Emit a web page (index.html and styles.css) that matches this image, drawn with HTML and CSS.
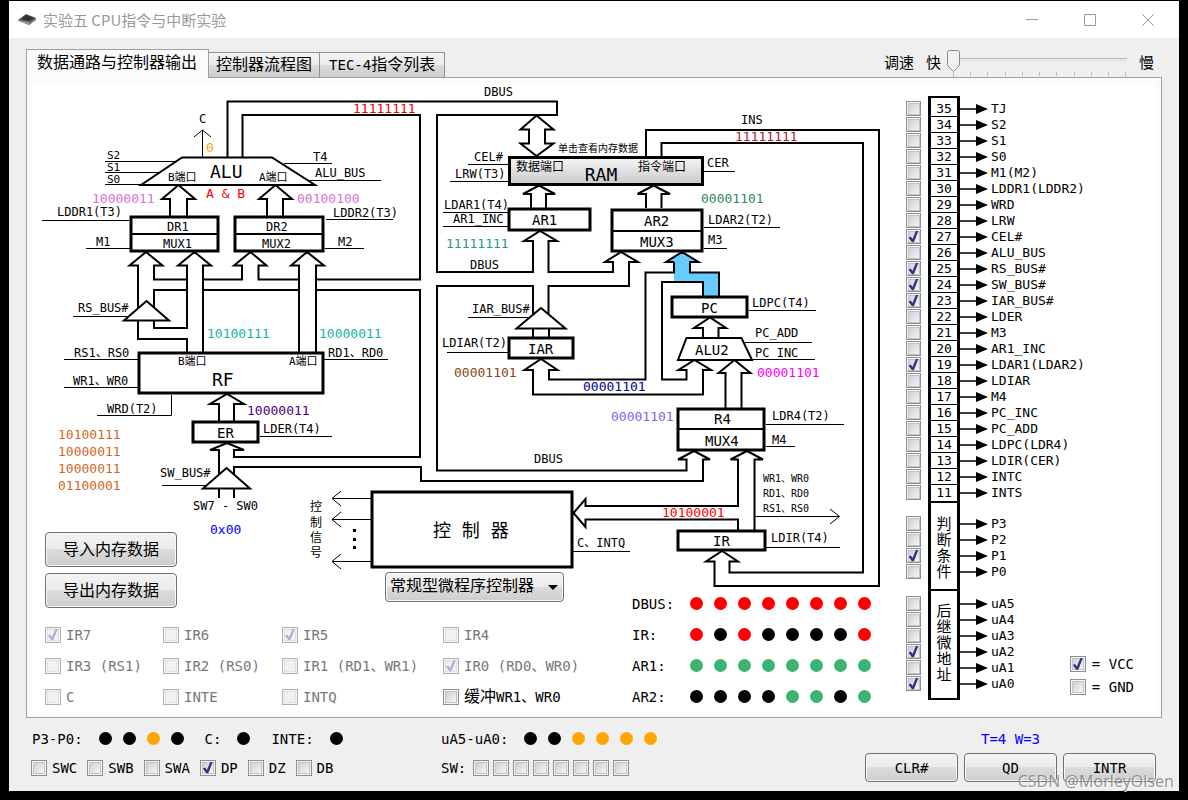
FILE: index.html
```html
<!DOCTYPE html>
<html lang="zh-CN">
<head>
    <meta charset="UTF-8">
    <title>实验五 CPU指令与中断实验</title>
    <link rel="stylesheet" href="styles.css">
</head>
<body>
    <div class="window">
        <header class="titlebar">
            <svg class="app-icon" width="20" height="14" viewBox="0 0 20 14">
                <path d="M1 7 L9 1 L19 5 L12 12 Z" fill="#555"/>
                <path d="M4 6 L9 2 L17 5 L12 8 Z" fill="#333"/>
                <path d="M1 7 L12 9 L12 12 L1 8 Z" fill="#999"/>
                <path d="M12 9 L19 5 L19 7 L12 12 Z" fill="#777"/>
            </svg>
            <h1>实验五 CPU指令与中断实验</h1>
            <div class="window-buttons">
                <button aria-label="最小化"><svg width="14" height="14"><path d="M1 6.500H13"/></svg></button>
                <button aria-label="最大化"><svg width="14" height="14"><path d="M1.500 1.500H12.500V12.500H1.500Z"/></svg></button>
                <button aria-label="关闭"><svg width="14" height="14"><path d="M1 1L13 13M13 1L1 13"/></svg></button>
            </div>
        </header>

        <main>
            <div class="toolbar">
                <div class="tabs" role="tablist">
                    <button class="tab active" role="tab" aria-selected="true">数据通路与控制器输出</button>
                    <button class="tab" role="tab">控制器流程图</button>
                    <button class="tab" role="tab"><span class="latin">TEC-4</span>指令列表</button>
                </div>
                <div class="speed">
                    <label for="speed">调速</label>
                    <span>快</span>
                    <div class="slider">
                        <input type="range" id="speed" min="0" max="10" value="0">
                        <svg class="slider-ticks" width="174" height="5"><path d="M.5 0V5M17.500 0V4M34.500 0V4M52.500 0V4M69.500 0V4M86.500 0V4M103.500 0V4M121.500 0V4M138.500 0V4M155.500 0V4M172.500 0V5"/></svg>
                    </div>
                    <span>慢</span>
                </div>
            </div>

            <section class="panel">
                <div class="board">
                    <div class="datapath">
                        <div class="diagram">
                            <svg width="856" height="505" viewBox="32 83 856 505">
                                <!-- selected path PC -> MUX3 -->
                                <path class="hot" d="M674 282V262H666L682 252L698 262H690V272H719V296H703V282Z"/>

                                <!-- DBUS and the buses hanging off it -->
                                <path class="bus" d="M227.500 157V101.500H557V115H437V272H533V241H524L540 231L557 241H548.500V272H613V262H605L621 252L638 262H629V286H548.500V318"/>
                                <path class="bus" d="M242.500 157V115H420V279.500H316M299 279.500H258.500V265.500H266.500L250.500 252L234 265.500H242V279.500H203M187 279.500H154V265.500H162.500L146 252L129.500 265.500H138V339H187V352"/>
                                <path class="bus" d="M187 290H154V328H187V265.500H178L194.500 252L211 265.500H203V352M203 290H299M299 352V265.500H291L307 252L324 265.500H316V352M316 290H420V457H234V450H244L227 443L210 450H219V480"/>
                                <path class="bus" d="M234 480V467H421V481H703V459.500H710L694 451L678 459.500H686.500V470.500H437V286H533V318"/>
                                <path class="bus" d="M219 488V498M234 488V498M533 328V337M549 328V337"/>
                                <path class="bus" d="M219 421V404H210L227 394L244 404H234V421"/>
                                <path class="bus" d="M170 216V199H162L178.500 185L195 199H187V216M267 216V199H259L275.500 185L292 199H283V216"/>
                                <path class="bus" d="M536.500 115.500L553.500 129.500H545V143.500H553.500L536.500 156L520.500 143.500H529V129.500H520.500Z"/>
                                <path class="bus" d="M531 208V194H523L539 185.500L555 194H546V208M646 208V194H637.500L653.500 185.500L670 194H661.500V208"/>

                                <!-- INS bus down to IR -->
                                <path class="bus" d="M646 157V130H879V586H714.500V561.500H706L722 551L738 561.500H729.500V572.500H863V143H661.500V157"/>

                                <!-- IAR, PC, ALU2 -->
                                <path class="bus" d="M674 262V272.500H645.500V379.500H549V370H557.500L541 359L524.500 370H533V394.500H703V370H711L694.500 360L678.500 370H686.500V379.500H662V282H703V296"/>
                                <path class="bus" d="M674 262H666L682 252L698.500 262H690V272.500H719V296"/>
                                <path class="bus" d="M703 338V328H694L710 317.500L726 328H718.500V338M725.500 408V373H718.500L734.500 360L750.500 373H741.500V408"/>

                                <!-- IR -> MUX4 and controller -->
                                <path class="bus" d="M754.500 530V459.500H763L747 451L730.500 459.500H738V506H585.500V499L573.500 513L585.500 527V519.500H738V530"/>

                                <!-- bus gates -->
                                <path class="bus gate" d="M146.500 301L169 320.500H124Z"/>
                                <path class="bus gate" d="M226.500 468L250 488.500H203Z"/>
                                <path class="bus gate" d="M541 308L565.500 328.500H516.500Z"/>

                                <!-- units -->
                                <path class="bus gate" d="M182 157.500H272L315 185H141Z"/>
                                <path class="bus gate" d="M686.500 338H741.500L752 360H678Z"/>
                                <rect class="unit" x="131" y="217" width="87" height="34"/>
                                <rect class="unit" x="235" y="217" width="88" height="34"/>
                                <rect class="unit" x="139" y="353" width="184" height="40"/>
                                <rect class="unit" x="193" y="422" width="65" height="20"/>
                                <rect class="unit" x="509" y="209" width="81" height="21"/>
                                <rect class="unit" x="612" y="210" width="90" height="41"/>
                                <rect class="unit" x="509" y="338" width="64" height="20"/>
                                <rect class="unit" x="672" y="297" width="75" height="20"/>
                                <rect class="unit" x="678" y="409" width="86" height="41"/>
                                <rect class="unit" x="678" y="531" width="87" height="19"/>
                                <rect class="unit" x="372" y="492" width="200" height="75"/>
                                <path class="bus" d="M131 234H218M235 234H323M612 231H702M678 429H764"/>

                                <!-- signal lines -->
                                <path class="wire" d="M202.500 157V130M194 137L202.500 130L211 137M105 161.500H176M105 172.500H160M105 184.500H143M284 163.500H332M308 180.500H381"/>
                                <path class="wire" d="M42 220.500H129M86 248.500H130M325 248.500H364M326 219.500H393M73 316.500H127M64 359.500H138M64 387.500H138M324 359.500H388M97 415.500H171.500V395M260 436.500H332M162 485.500H207"/>
                                <path class="wire" d="M468 164.500H508M450 181.500H508M703 171.500H735M443 212.500H508M443 226.500H508M704 227.500H780M704 248.500H727M468 317.500H529M447 352.500H508M749 310.500H816M745 342.500H812M752 359.500H815M766 424.500H844M766 446.500H795"/>
                                <path class="wire" d="M755 516.500H839M830 509L839.500 516.500L830 524M766 547.500H840M573 551.500H630"/>
                                <path class="wire" d="M371 498.500H332M341 491L332 498.500L341 506M371 519.500H332M341 512L332 519.500L341 527M371 561.500H332M341 554L332 561.500L341 569"/>
                                <path d="M353 529h3v3h-3zM353 538h3v3h-3zM353 546h3v3h-3z"/>

                                <g class="label">
                                    <text x="199" y="123">C</text>
                                    <text x="107" y="159" class="port">S2</text>
                                    <text x="107" y="171" class="port">S1</text>
                                    <text x="107" y="183" class="port">S0</text>
                                    <text x="313" y="161">T4</text>
                                    <text x="315" y="177">ALU_BUS</text>
                                    <text x="168" y="181" class="port">B端口</text>
                                    <text x="259" y="181" class="port">A端口</text>
                                    <text x="57" y="216">LDDR1(T3)</text>
                                    <text x="333" y="217">LDDR2(T3)</text>
                                    <text x="96" y="246">M1</text>
                                    <text x="338" y="246">M2</text>
                                    <text x="167" y="231">DR1</text>
                                    <text x="163" y="248">MUX1</text>
                                    <text x="266" y="231">DR2</text>
                                    <text x="262" y="248">MUX2</text>
                                    <text x="78" y="312">RS_BUS#</text>
                                    <text x="74" y="357">RS1、RS0</text>
                                    <text x="73" y="385">WR1、WR0</text>
                                    <text x="328" y="357">RD1、RD0</text>
                                    <text x="178" y="365" class="port">B端口</text>
                                    <text x="289" y="365" class="port">A端口</text>
                                    <text x="107" y="413">WRD(T2)</text>
                                    <text x="263" y="433">LDER(T4)</text>
                                    <text x="160" y="477">SW_BUS#</text>
                                    <text x="193" y="510">SW7 - SW0</text>
                                    <text x="484" y="96">DBUS</text>
                                    <text x="741" y="124">INS</text>
                                    <text x="474" y="161">CEL#</text>
                                    <text x="455" y="178">LRW(T3)</text>
                                    <text x="707" y="167">CER</text>
                                    <text x="444" y="209">LDAR1(T4)</text>
                                    <text x="453" y="223">AR1_INC</text>
                                    <text x="470" y="269">DBUS</text>
                                    <text x="708" y="224">LDAR2(T2)</text>
                                    <text x="708" y="244">M3</text>
                                    <text x="472" y="313">IAR_BUS#</text>
                                    <text x="442" y="347">LDIAR(T2)</text>
                                    <text x="752" y="307">LDPC(T4)</text>
                                    <text x="755" y="337">PC_ADD</text>
                                    <text x="755" y="357">PC_INC</text>
                                    <text x="772" y="420">LDR4(T2)</text>
                                    <text x="772" y="444">M4</text>
                                    <text x="534" y="463">DBUS</text>
                                    <text x="771" y="542">LDIR(T4)</text>
                                    <text x="577" y="547">C、INTQ</text>
                                    <text x="310" y="511">控</text>
                                    <text x="310" y="527">制</text>
                                    <text x="310" y="542">信</text>
                                    <text x="310" y="557">号</text>
                                </g>

                                <g class="note">
                                    <text x="763" y="482">WR1、WR0</text>
                                    <text x="763" y="497">RD1、RD0</text>
                                    <text x="763" y="512">RS1、RS0</text>
                                    <text x="558" y="152">单击查看内存数据</text>
                                </g>

                                <g class="name">
                                    <text x="217" y="438">ER</text>
                                    <text x="532" y="225">AR1</text>
                                    <text x="644" y="226">AR2</text>
                                    <text x="640" y="247">MUX3</text>
                                    <text x="528" y="354">IAR</text>
                                    <text x="701" y="313">PC</text>
                                    <text x="695" y="355">ALU2</text>
                                    <text x="714" y="424">R4</text>
                                    <text x="705" y="446">MUX4</text>
                                    <text x="713" y="546">IR</text>
                                </g>

                                <g class="name-big">
                                    <text x="210" y="178">ALU</text>
                                    <text x="212" y="386">RF</text>
                                    <text x="433" y="537">控 制 器</text>
                                </g>

                                <g class="value">
                                    <text x="353" y="113" fill="#ff0000">11111111</text>
                                    <text x="206" y="152" fill="#ffa500">0</text>
                                    <text x="206" y="198" fill="#ff0000">A &amp; B</text>
                                    <text x="92" y="203" fill="#da70d6">10000011</text>
                                    <text x="297" y="203" fill="#da70d6">00100100</text>
                                    <text x="207" y="338" fill="#20b2aa">10100111</text>
                                    <text x="319" y="338" fill="#20b2aa">10000011</text>
                                    <text x="247" y="415" fill="#4b0082">10000011</text>
                                    <text x="58" y="439" fill="#d2691e">10100111</text>
                                    <text x="58" y="456" fill="#d2691e">10000011</text>
                                    <text x="58" y="473" fill="#d2691e">10000011</text>
                                    <text x="58" y="490" fill="#d2691e">01100001</text>
                                    <text x="210" y="534" fill="#0000ff">0x00</text>
                                    <text x="735" y="141" fill="#b22222">11111111</text>
                                    <text x="701" y="203" fill="#2e8b57">00001101</text>
                                    <text x="446" y="248" fill="#2e9688">11111111</text>
                                    <text x="454" y="377" fill="#8b4513">00001101</text>
                                    <text x="583" y="391" fill="#00008b">00001101</text>
                                    <text x="757" y="377" fill="#ff00ff">00001101</text>
                                    <text x="611" y="421" fill="#7b68ee">00001101</text>
                                    <text x="662" y="517" fill="#ff0000">10100001</text>
                                </g>
                            </svg>

                            <button class="ram">
                                <span class="ram-port">数据端口</span>
                                <span class="ram-name">RAM</span>
                                <span class="ram-port">指令端口</span>
                            </button>

                            <div class="memory-buttons">
                                <button class="btn">导入内存数据</button>
                                <button class="btn">导出内存数据</button>
                            </div>

                            <div class="controller-type">
                                <select class="btn" aria-label="控制器类型">
                                    <option>常规型微程序控制器</option>
                                </select>
                            </div>
                        </div>

                        <div class="registers">
                            <div class="ir-bits">
                                <label><input type="checkbox" disabled checked>IR7</label>
                                <label><input type="checkbox" disabled>IR6</label>
                                <label><input type="checkbox" disabled checked>IR5</label>
                                <label><input type="checkbox" disabled>IR4</label>
                                <label><input type="checkbox" disabled>IR3 (RS1)</label>
                                <label><input type="checkbox" disabled>IR2 (RS0)</label>
                                <label><input type="checkbox" disabled>IR1 (RD1、WR1)</label>
                                <label><input type="checkbox" disabled checked>IR0 (RD0、WR0)</label>
                                <label><input type="checkbox" disabled>C</label>
                                <label><input type="checkbox" disabled>INTE</label>
                                <label><input type="checkbox" disabled>INTQ</label>
                                <label><input type="checkbox"><span><span class="cjk">缓冲</span>WR1、WR0</span></label>
                            </div>
                            <div class="led-table">
                                <div class="led-row"><span class="led-name">DBUS:</span><div class="leds" data-bits="11111111" data-color="red"></div></div>
                                <div class="led-row"><span class="led-name">IR:</span><div class="leds" data-bits="10100001" data-color="red"></div></div>
                                <div class="led-row"><span class="led-name">AR1:</span><div class="leds" data-bits="11111111" data-color="green"></div></div>
                                <div class="led-row"><span class="led-name">AR2:</span><div class="leds" data-bits="00001101" data-color="green"></div></div>
                            </div>
                        </div>
                    </div>

                    <div class="outputs">
                        <div class="ports" id="ports"></div>
                        <div class="legend">
                            <label><input type="checkbox" checked>= VCC</label>
                            <label><input type="checkbox">= GND</label>
                        </div>
                    </div>
                </div>
            </section>

            <footer class="console">
                <div class="console-block flags">
                    <div class="console-row status">
                        <span>P3-P0:</span><div class="leds" data-bits="0010" data-color="orange"></div>
                        <span>C:</span><div class="leds" data-bits="0" data-color="orange"></div>
                        <span>INTE:</span><div class="leds" data-bits="0" data-color="orange"></div>
                    </div>
                    <div class="console-row switches">
                        <label><input type="checkbox">SWC</label>
                        <label><input type="checkbox">SWB</label>
                        <label><input type="checkbox">SWA</label>
                        <label><input type="checkbox" checked>DP</label>
                        <label><input type="checkbox">DZ</label>
                        <label><input type="checkbox">DB</label>
                    </div>
                </div>
                <div class="console-block address">
                    <div class="console-row status">
                        <span>uA5-uA0:</span><div class="leds" data-bits="001111" data-color="orange"></div>
                    </div>
                    <div class="console-row">
                        <span>SW:</span><div class="sw" id="sw"></div>
                    </div>
                </div>
                <div class="console-block run">
                    <div class="console-row timing">T=4 W=3</div>
                    <div class="console-row run-buttons">
                        <button class="btn">CLR#</button>
                        <button class="btn">QD</button>
                        <button class="btn">INTR</button>
                    </div>
                </div>
            </footer>
        </main>
    </div>
    <div class="watermark">CSDN @MorleyOlsen</div>
    <script src="script.js"></script>
</body>
</html>
```

FILE: styles.css
```css
:root {
    --mono: "DejaVu Sans Mono", "Noto Sans CJK SC", monospace;
    --sans: "Noto Sans", "Noto Sans CJK SC", sans-serif;
    --window: #efefef;
    --frame: #a0a0a4;
    --btn-border: #707070;
    --btn-face: linear-gradient(#f3f3f3, #ebebeb 50%, #dcdcdc 50%, #cdcdcd);
}

* {
    box-sizing: border-box;
}

body {
    margin: 0;
    padding: 1px 9px 9px;
    background: #000;
    color: #000;
    font-family: var(--mono);
    font-size: 14px;
    line-height: 16px;
}

button, select, input {
    font: inherit;
    color: inherit;
    margin: 0;
}

.window {
    background: var(--window);
    min-height: calc(100vh - 10px);
}

/* title bar */
.titlebar {
    display: flex;
    align-items: center;
    height: 37px;
    padding-left: 8px;
    background: #fff;
}

.titlebar h1 {
    flex: 1;
    margin: 0 0 0 6px;
    font: 15px/20px "Noto Sans CJK SC", sans-serif;
    color: #999;
}

.window-buttons {
    display: flex;
    padding-right: 2px;
}

.window-buttons button {
    width: 58px;
    height: 36px;
    padding: 0;
    border: 0;
    background: none;
}

.window-buttons svg {
    display: block;
    margin: auto;
}

.window-buttons path {
    fill: none;
    stroke: #999;
}

main {
    padding: 11px 17px 8px;
}

/* tabs and speed slider */
.toolbar {
    display: flex;
    justify-content: space-between;
    align-items: flex-end;
}

.tabs {
    display: flex;
    align-items: flex-end;
    font-size: 16px;
}

.tab {
    height: 25px;
    padding: 0 7px;
    border: 1px solid #8e8f94;
    border-left-width: 0;
    border-bottom: 0;
    background: var(--btn-face);
    white-space: nowrap;
}

.tab:last-child {
    padding: 0 9px;
}

.tab.active {
    position: relative;
    height: 29px;
    margin-bottom: -1px;
    padding: 0 11px 2px 10px;
    border-left-width: 1px;
    border-color: var(--frame);
    background: #fbfbfb;
}

.latin {
    font-size: 14px;
}

.cjk {
    font-size: 16px;
}

.speed {
    display: flex;
    align-items: center;
    gap: 12px;
    padding-right: 8px;
    height: 28px;
    font-size: 15px;
}

.slider {
    width: 180px;
    margin: 0 0 0 -6px;
}

.slider input {
    appearance: none;
    display: block;
    width: 100%;
    height: 22px;
    background: linear-gradient(#b3b8b8 1px, #e4e9e9 1px) 6px 8px / calc(100% - 6px) 4px no-repeat;
}

.slider input::-webkit-slider-thumb {
    appearance: none;
    width: 13px;
    height: 22px;
    background: url('data:image/svg+xml,<svg xmlns="http://www.w3.org/2000/svg" width="13" height="22"><path d="M2.500.5h8q2 0 2 2v13l-6 6l-6-6v-13q0-2 2-2z" fill="%23f1f1f1" stroke="%238a8a8a"/></svg>') no-repeat;
}

.slider-ticks {
    display: block;
    margin-left: 6px;
    fill: none;
    stroke: #c0c0c0;
}

/* main panel */
.panel {
    padding: 5px;
    border: 1px solid var(--frame);
    background: #fbfbfb;
}

.board {
    display: flex;
    background: #fff;
}

.diagram {
    position: relative;
}

.diagram svg {
    display: block;
}

.bus {
    fill: none;
    stroke: #000;
    stroke-width: 2;
}

.gate {
    fill: #fff;
}

.unit {
    fill: #fff;
    stroke: #000;
    stroke-width: 3;
}

.wire {
    fill: none;
    stroke: #000;
}

.hot {
    fill: #66ccff;
}

.label {
    font-size: 12px;
}

.port {
    font-size: 11px;
}

.note {
    font-size: 10px;
}

.name {
    font-size: 14px;
}

.name-big {
    font-size: 18px;
}

.value {
    font-size: 13px;
}

.btn {
    border: 1px solid var(--btn-border);
    border-radius: 4px;
    background: var(--btn-face);
    box-shadow: inset 0 0 0 1px #f8f8f8;
}

/* controls lying on the drawing */
.ram {
    position: absolute;
    left: 476px;
    top: 73px;
    display: flex;
    justify-content: space-between;
    width: 196px;
    height: 30px;
    padding: 0 15px 0 5px;
    border: 3px solid #000;
    background: linear-gradient(#f3f3f3, #ccc);
}

.ram-port {
    font-size: 12px;
}

.ram-name {
    align-self: flex-end;
    font-size: 18px;
}

.memory-buttons {
    position: absolute;
    left: 13px;
    top: 449px;
    display: flex;
    flex-direction: column;
    gap: 6px;
}

.memory-buttons .btn {
    height: 35px;
    padding: 0 17px;
    font-size: 16px;
}

.controller-type {
    position: absolute;
    left: 353px;
    top: 489px;
}

.controller-type select {
    appearance: none;
    height: 30px;
    padding: 0 28px 2px 4px;
    font-size: 16px;
}

.controller-type::after {
    content: "";
    position: absolute;
    right: 6px;
    top: 13px;
    border: 5px solid transparent;
    border-top-color: #000;
    border-bottom: 0;
    pointer-events: none;
}

/* check boxes */
label {
    display: inline-flex;
    align-items: center;
    gap: 5px;
    white-space: nowrap;
}

input[type="checkbox"] {
    appearance: none;
    flex: none;
    display: grid;
    place-items: center;
    width: 16px;
    height: 16px;
    border: 1px solid #8e8f8f;
    background: #f4f4f4;
}

input[type="checkbox"]::before {
    content: "";
    grid-area: 1 / 1;
    width: 10px;
    height: 10px;
    border: 1px solid #c0c4c9;
    background: linear-gradient(135deg, #cbcfd5, #f6f6f6);
}

input[type="checkbox"]:checked::after {
    content: "";
    grid-area: 1 / 1;
    z-index: 1;
    width: 10px;
    height: 12px;
    background: #31347c;
    clip-path: polygon(0 58%, 22% 50%, 40% 70%, 76% 0, 100% 0, 56% 94%, 36% 100%);
}

input[type="checkbox"]:disabled {
    border-color: #b1b1b1;
}

input[type="checkbox"]:disabled::before {
    border-color: #e0e0e0;
    background: #f1f1f1;
}

input[type="checkbox"]:disabled:checked::after {
    background: #aeb3d4;
}

label:has(:disabled) {
    color: #787878;
}

/* registers */
.registers {
    display: flex;
}

.ir-bits {
    display: grid;
    grid-template-columns: 118px 119px 161px auto;
    grid-auto-rows: 31px;
    flex: 0 0 600px;
    align-content: end;
    justify-content: start;
    padding-left: 13px;
}

.led-row {
    display: flex;
    align-items: center;
    height: 31px;
}

.led-name {
    width: 58px;
}

.leds {
    display: flex;
    gap: 11px;
}

.led {
    width: 13px;
    height: 13px;
    border-radius: 50%;
    background: #000;
}

.led.red {
    background: #f00;
}

.led.green {
    background: #3cb371;
}

.led.orange {
    background: #ffa500;
}

/* controller outputs */
.outputs {
    flex: 1;
    display: flex;
    flex-direction: column;
    padding: 13px 0 0 18px;
    font-size: 13px;
    position: relative;
}

.port-group {
    display: grid;
    grid-template-columns: 22px 32px auto;
}

.ticks, .slots, .signals {
    display: flex;
    flex-direction: column;
}

.ticks > *, .slots > .slot, .signals > * {
    height: 16px;
}

.port-group.micro > * {
    padding: 5px 0 2px;
}

.port-group.judge > * {
    padding: 13px 0 9px;
}

.port-group.next > * {
    padding: 5px 0 8px;
}

.ports .slots {
    border: solid #000;
    border-width: 0 3px 2px;
    justify-content: center;
    text-align: center;
}

.ports .micro .slots {
    border-top-width: 2px;
    padding: 3px 0 0;
    justify-content: flex-start;
}

.slot {
    border-bottom: 1px solid #000;
}

.slot:last-child {
    border-bottom: 0;
}

.slots p {
    margin: 0 auto;
    width: 16px;
    font-size: 15px;
    line-height: 16px;
}

.ports input {
    width: 15px;
    height: 15px;
}

.signals label {
    gap: 3px;
}

.legend {
    position: absolute;
    right: 22px;
    bottom: 17px;
    display: flex;
    flex-direction: column;
    gap: 7px;
    font-size: 14px;
}

.legend label {
    gap: 6px;
}

/* lower console */
.console {
    display: flex;
    padding: 6px 6px 0 5px;
}

.console-block {
    display: flex;
    flex-direction: column;
}

.flags {
    flex: 0 0 410px;
}

.address {
    flex: 1;
}

.console-row {
    display: flex;
    align-items: center;
    height: 29px;
}

.status {
    padding-left: 1px;
    gap: 16px;
}

.flags .status .leds + span {
    margin-left: 5px;
}

.status span {
    white-space: nowrap;
}

.address .status {
    padding-left: 0;
}

.switches {
    gap: 10px;
}

.sw {
    display: flex;
    gap: 4px;
    margin-left: 7px;
}

.timing {
    justify-content: center;
    color: #00f;
    font-size: 14px;
}

.run-buttons {
    gap: 6px;
}

.run-buttons .btn {
    width: 93px;
    height: 29px;
}

.watermark {
    position: absolute;
    right: 14px;
    top: 770px;
    font: 16px/22px var(--sans);
    color: rgba(120, 120, 120, 0.75);
    text-shadow: 1px 1px 0 rgba(255, 255, 255, 0.7);
    pointer-events: none;
}
```

FILE: script.js
```js
// controller outputs, from the top of the column to the bottom
var groups = [
    {
        cls: "micro",
        first: 35,
        names: ["TJ", "S2", "S1", "S0", "M1(M2)", "LDDR1(LDDR2)", "WRD", "LRW", "CEL#", "ALU_BUS",
            "RS_BUS#", "SW_BUS#", "IAR_BUS#", "LDER", "M3", "AR1_INC", "LDAR1(LDAR2)", "LDIAR",
            "M4", "PC_INC", "PC_ADD", "LDPC(LDR4)", "LDIR(CER)", "INTC", "INTS"],
        on: ["CEL#", "RS_BUS#", "SW_BUS#", "IAR_BUS#", "LDAR1(LDAR2)"]
    },
    { cls: "judge", title: "判断条件", names: ["P3", "P2", "P1", "P0"], on: ["P1"] },
    { cls: "next", title: "后继微地址", names: ["uA5", "uA4", "uA3", "uA2", "uA1", "uA0"], on: ["uA2", "uA0"] }
];

var arrow = '<svg width="28" height="12"><path d="M0 6H16" stroke="#000" stroke-width="1.500"/><path d="M16 1L28 6L16 11Z"/></svg>';

var html = "";
groups.forEach(function(g) {
    var ticks = "", slots = "", signals = "";
    g.names.forEach(function(name, i) {
        var id = g.cls + i;
        var checked = g.on.indexOf(name) >= 0 ? " checked" : "";
        ticks += '<div><input type="checkbox" id="' + id + '"' + checked + '></div>';
        signals += '<label for="' + id + '">' + arrow + name + '</label>';
        if (g.first)
            slots += '<div class="slot">' + (g.first - i) + '</div>';
    });
    if (g.title)
        slots = '<p>' + g.title + '</p>';
    html += '<div class="port-group ' + g.cls + '"><div class="ticks">' + ticks +
        '</div><div class="slots">' + slots + '</div><div class="signals">' + signals + '</div></div>';
});
document.getElementById("ports").innerHTML = html;

// LEDs
document.querySelectorAll(".leds").forEach(function(row) {
    row.dataset.bits.split("").forEach(function(bit) {
        var led = document.createElement("span");
        led.className = bit == "1" ? "led " + row.dataset.color : "led";
        row.appendChild(led);
    });
});

// data switches SW7..SW0
var sw = document.getElementById("sw");
for (var n = 7; n >= 0; n--)
    sw.innerHTML += '<input type="checkbox" aria-label="SW' + n + '">';
```
